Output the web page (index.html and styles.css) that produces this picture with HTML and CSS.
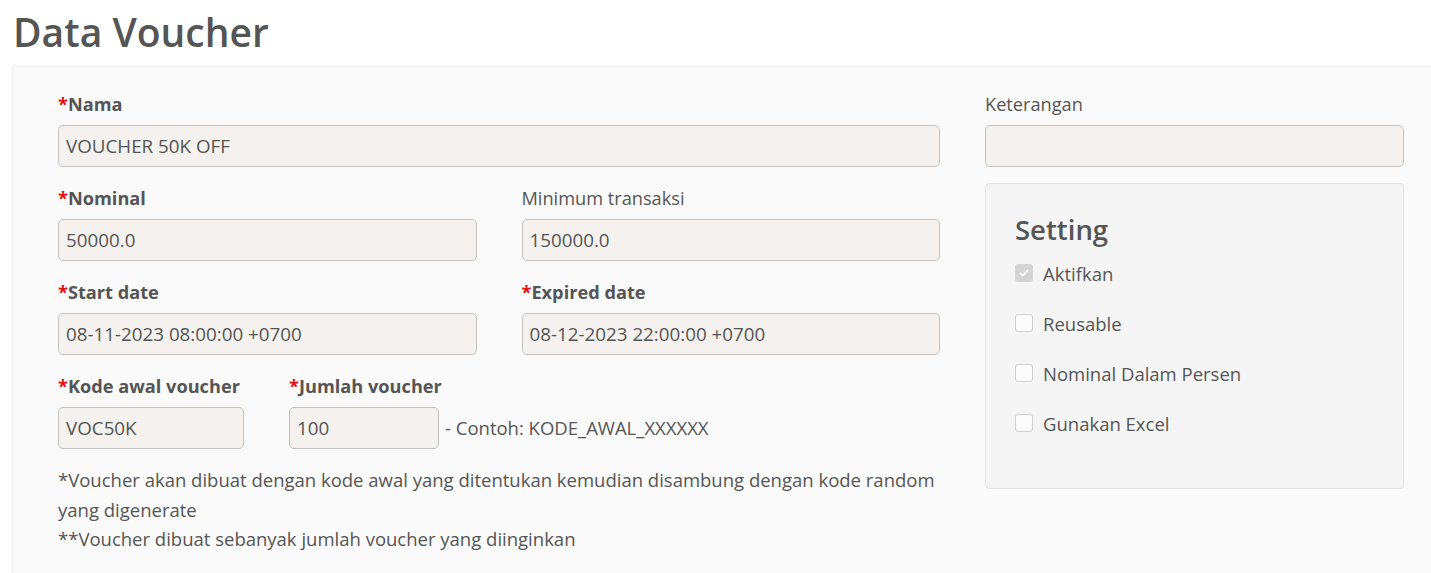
FILE: index.html
```html
<!DOCTYPE html>
<html lang="en">
<head>
    <meta charset="UTF-8">
    <meta name="viewport" content="width=device-width, initial-scale=1.0">
    <title>Data Voucher</title>
    <link rel="stylesheet" href="styles.css">
</head>
<body>
    <h1 class="page-title">Data Voucher</h1>

    <div class="panel">
        <!-- Left column -->
        <div class="col-main">
            <div class="form-group">
                <label class="label required"><span class="star">*</span>Nama</label>
                <div class="input">VOUCHER 50K OFF</div>
            </div>

            <div class="form-row">
                <div class="form-group">
                    <label class="label required"><span class="star">*</span>Nominal</label>
                    <div class="input">50000.0</div>
                </div>
                <div class="form-group">
                    <label class="label">Minimum transaksi</label>
                    <div class="input">150000.0</div>
                </div>
            </div>

            <div class="form-row">
                <div class="form-group">
                    <label class="label required"><span class="star">*</span>Start date</label>
                    <div class="input">08-11-2023 08:00:00 +0700</div>
                </div>
                <div class="form-group">
                    <label class="label required"><span class="star">*</span>Expired date</label>
                    <div class="input">08-12-2023 22:00:00 +0700</div>
                </div>
            </div>

            <div class="code-row">
                <div class="form-group code-prefix">
                    <label class="label required"><span class="star">*</span>Kode awal voucher</label>
                    <div class="input">VOC50K</div>
                </div>
                <div class="form-group code-count">
                    <label class="label required"><span class="star">*</span>Jumlah voucher</label>
                    <div class="input">100</div>
                </div>
                <div class="code-hint">- Contoh: KODE_AWAL_XXXXXX</div>
            </div>

            <div class="notes">
                <p>*Voucher akan dibuat dengan kode awal yang ditentukan kemudian disambung dengan kode random yang digenerate</p>
                <p>**Voucher dibuat sebanyak jumlah voucher yang diinginkan</p>
            </div>
        </div>

        <!-- Right column -->
        <div class="col-side">
            <div class="form-group">
                <label class="label">Keterangan</label>
                <div class="input"></div>
            </div>

            <div class="well">
                <h3 class="well-title">Setting</h3>
                <div class="check">
                    <span class="box checked">
                        <svg viewBox="0 0 16 16" width="12" height="12"><path d="M3 8.5l3.2 3L13 4.5" fill="none" stroke="#fff" stroke-width="2" stroke-linecap="round" stroke-linejoin="round"/></svg>
                    </span>
                    Aktifkan
                </div>
                <div class="check"><span class="box"></span>Reusable</div>
                <div class="check"><span class="box"></span>Nominal Dalam Persen</div>
                <div class="check"><span class="box"></span>Gunakan Excel</div>
            </div>
        </div>
    </div>
</body>
</html>
```

FILE: styles.css
```css
/* General */
body {
    margin: 0;
    padding: 0 0 0 12px;
    font-family: 'Open Sans', 'Noto Sans', sans-serif;
    font-size: 18.5px;
    color: #555;
    background: #fff;
}
.page-title {
    margin: 0;
    padding: 4px 0 0 1px;
    height: 62px;
    font-size: 39px;
    font-weight: 600;
    line-height: 56px;
    color: #555;
}

/* Panel */
.panel {
    box-sizing: border-box;
    display: grid;
    grid-template-columns: 882px 419px;
    column-gap: 45px;
    align-items: start;
    min-height: 507px;
    padding: 24px 45px 20px;
    background: #fafafa;
    border-top: 1px solid #eee;
    border-left: 1px solid #eee;
}

/* Form fields */
.form-group {
    margin-bottom: 18px;
}
.label {
    display: block;
    height: 26px;
    line-height: 26px;
    margin-bottom: 8px;
    font-size: 18.2px;
    white-space: nowrap;
}
.label.required {
    font-weight: 700;
}
.star {
    color: #e01010;
}
.input {
    box-sizing: border-box;
    height: 42px;
    line-height: 40px;
    padding: 0 7px;
    background: #f4f1ee;
    border: 1px solid #c4c2c0;
    border-radius: 5px;
    font-size: 18.8px;
    white-space: nowrap;
}
.form-row {
    display: grid;
    grid-template-columns: 1fr 1fr;
    column-gap: 45px;
}

/* Kode row */
.code-row {
    display: flex;
    align-items: flex-end;
    gap: 45px;
}
.code-row .form-group {
    margin-bottom: 0;
}
.code-prefix {
    width: 186px;
}
.code-count {
    width: 150px;
}
.code-hint {
    margin-left: -39px;
    height: 42px;
    line-height: 42px;
    white-space: nowrap;
}

/* Notes */
.notes {
    margin-top: 16px;
}
.notes p {
    margin: 0;
    line-height: 29.5px;
}

/* Setting box */
.well {
    box-sizing: border-box;
    height: 306px;
    margin-top: -2px;
    padding: 26px 29px;
    background: #f5f5f5;
    border: 1px solid #e3e3e3;
    border-radius: 4px;
}
.well-title {
    margin: 0 0 8px;
    font-size: 27.5px;
    font-weight: 600;
    line-height: 40px;
}
.check {
    display: flex;
    align-items: center;
    gap: 10px;
    height: 50px;
    margin-top: -10px;
    margin-bottom: 10px;
}
.box {
    box-sizing: border-box;
    display: inline-flex;
    align-items: center;
    justify-content: center;
    flex: none;
    width: 18px;
    height: 18px;
    background: #fbfbfb;
    border: 1px solid #cfcfcf;
    border-radius: 3px;
}
.box.checked {
    background: #d4d4d4;
    border-color: #d4d4d4;
}
```
